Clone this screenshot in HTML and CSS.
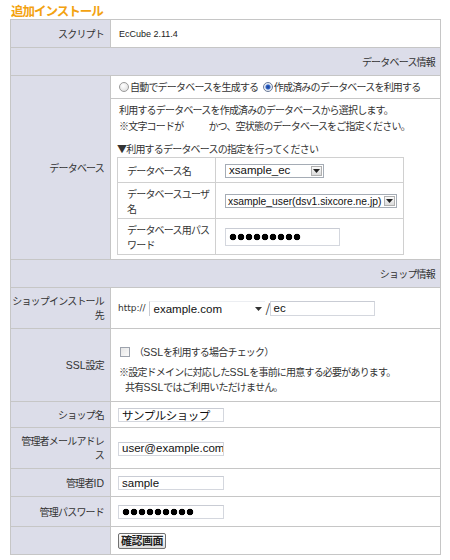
FILE: index.html
```
<!DOCTYPE html>
<html lang="ja">
<head>
<meta charset="utf-8">
<link rel="stylesheet" href="styles.css">
</head>
<body>
<div class="page">
  <h1 class="title">追加インストール</h1>
  <table class="form">
    <colgroup><col class="c-label"><col class="c-value"></colgroup>
    <tr class="r-script">
      <th class="label">スクリプト</th>
      <td class="value latin-sm">EcCube 2.11.4</td>
    </tr>
    <tr class="r-sec">
      <th class="sec" colspan="2">データベース情報</th>
    </tr>
    <tr class="r-radio">
      <th class="label" rowspan="2">データベース</th>
      <td class="value radios">
        <span class="radio"></span><span class="rtext">自動でデータベースを生成する</span>
        <span class="radio on"></span><span class="rtext">作成済みのデータベースを利用する</span>
      </td>
    </tr>
    <tr class="r-desc">
      <td class="value desc">
        <p class="lines">利用するデータベースを作成済みのデータベースから選択します。<br>※文字コードが<span class="blank"></span>かつ、空状態のデータベースをご指定ください。</p>
        <p class="pick">▼利用するデータベースの指定を行ってください</p>
        <table class="sub">
          <colgroup><col class="c-slabel"><col class="c-sval"></colgroup>
          <tr class="s1">
            <th class="slabel">データベース名</th>
            <td class="sval"><span class="select s-db"><span class="sv">xsample_ec</span><span class="sbtn"><svg width="7" height="4" viewBox="0 0 7 4"><path d="M0 0H7L3.5 4Z" fill="#222"/></svg></span></span></td>
          </tr>
          <tr class="s2">
            <th class="slabel">データベースユーザ<br>名</th>
            <td class="sval"><span class="select s-user"><span class="sv">xsample_user(dsv1.sixcore.ne.jp)</span><span class="sbtn"><svg width="7" height="4" viewBox="0 0 7 4"><path d="M0 0H7L3.5 4Z" fill="#222"/></svg></span></span></td>
          </tr>
          <tr class="s3">
            <th class="slabel">データベース用パス<br>ワード</th>
            <td class="sval"><span class="input i-dbpw"><span class="dots"></span></span></td>
          </tr>
        </table>
      </td>
    </tr>
    <tr class="r-sec">
      <th class="sec" colspan="2">ショップ情報</th>
    </tr>
    <tr class="r-install">
      <th class="label">ショップインストール<br>先</th>
      <td class="value">
        <div class="urlrow">
          <span class="http">http://</span>
          <span class="dsel"><span class="sv">example.com</span><svg width="7" height="4" viewBox="0 0 7 4"><path d="M0 0H7L3.5 4Z" fill="#333"/></svg></span>
          <span class="slash">/</span>
          <span class="input i-path">ec</span>
        </div>
      </td>
    </tr>
    <tr class="r-ssl">
      <th class="label"><span class="lt">SSL</span>設定</th>
      <td class="value ssl">
        <div class="checkline"><span class="check"></span><span>（<span class="lt">SSL</span>を利用する場合チェック）</span></div>
        <p class="note">※設定ドメインに対応した<span class="lt">SSL</span>を事前に用意する必要があります。<br><span class="indent"></span>共有<span class="lt">SSL</span>ではご利用いただけません。</p>
      </td>
    </tr>
    <tr class="r-name">
      <th class="label">ショップ名</th>
      <td class="value"><span class="input i-main jp">サンプルショップ</span></td>
    </tr>
    <tr class="r-mail">
      <th class="label">管理者メールアドレ<br>ス</th>
      <td class="value"><span class="input i-main">user@example.com</span></td>
    </tr>
    <tr class="r-id">
      <th class="label">管理者<span class="lt">ID</span></th>
      <td class="value"><span class="input i-main">sample</span></td>
    </tr>
    <tr class="r-pw">
      <th class="label">管理パスワード</th>
      <td class="value"><span class="input i-main"><span class="dots"></span></span></td>
    </tr>
    <tr class="r-btn">
      <th class="label"></th>
      <td class="value"><button class="btn" type="button">確認画面</button></td>
    </tr>
  </table>
</div>
</body>
</html>
```
FILE: styles.css
```
html, body {
  margin: 0;
  padding: 0;
  background: #fff;
}
body {
  font-family: "Noto Sans CJK JP", sans-serif;
  font-size: 10px;
  line-height: 14px;
  letter-spacing: -0.8px;
  color: #333;
}
.lt {
  font-family: "Liberation Sans", sans-serif;
  letter-spacing: 0;
  font-size: 10.5px;
  line-height: 1;
}
.page {
  padding: 2px 10px 0 10px;
}
.title {
  margin: 0;
  font-size: 12.5px;
  letter-spacing: -1px;
  line-height: 17px;
  height: 17px;
  font-weight: bold;
  color: #f3a210;
  padding-left: 1px;
}
.form {
  border-collapse: collapse;
  table-layout: fixed;
  width: 430px;
  border: 1px solid #bdbdbd;
}
.c-label { width: 100px; }
.c-value { width: 330px; }
.form > tbody > tr > th,
.form > tbody > tr > td {
  border: 1px solid #c6c6c6;
  padding: 0;
  vertical-align: middle;
}
.label {
  background: #dcdde9;
  font-weight: normal;
  text-align: right;
  padding: 0 6px 0 0 !important;
}
.sec {
  background: #dcdde9;
  font-weight: normal;
  text-align: right;
  padding: 0 5px 0 0 !important;
}
.value {
  padding-left: 8px !important;
  padding-right: 6px !important;
  background: #fff;
}
.r-script > * { height: 27px; }
.r-sec > * { height: 27px; }
.r-radio > * { height: 22px; }
.r-install > * { height: 40px; }
.r-ssl > * { height: 72px; }
.r-name > * { height: 25px; }
.r-mail > * { height: 40px; }
.r-id > * { height: 27px; }
.r-pw > * { height: 29px; }
.r-btn > * { height: 27px; }

.latin-sm {
  font-family: "Liberation Sans", sans-serif;
  font-size: 9px;
  letter-spacing: 0;
  color: #222;
}
.radios {
  white-space: nowrap;
  padding-left: 8px !important;
}
.radio {
  display: inline-block;
  width: 8px;
  height: 8px;
  border-radius: 50%;
  border: 1px solid #9a9a9a;
  background: radial-gradient(circle at 40% 35%, #fff, #d8d8d8);
  vertical-align: -1px;
  margin-right: 1px;
}
.radio.on {
  background: radial-gradient(circle, #1a3c8c 0, #2f64c8 2px, #dfe6f2 3px, #fff 5px);
  border-color: #6a7a98;
}
.rtext {
  margin-right: 3px;
}
.desc {
  vertical-align: top !important;
  padding-top: 3px !important;
  padding-bottom: 4px !important;
  padding-left: 8px !important;
}
.lines {
  margin: 0;
  line-height: 16px;
}
.blank {
  display: inline-block;
  width: 25px;
}
.pick {
  margin: 7px 0 0 -2px;
  line-height: 16px;
}
.sub {
  border-collapse: collapse;
  table-layout: fixed;
  width: 286px;
  margin-left: -2px;
  border: 1px solid #c8c8c8;
}
.c-slabel { width: 98px; }
.c-sval { width: 188px; }
.sub th, .sub td {
  border: 1px solid #d0d0d0;
  padding: 0 0 0 9px;
  vertical-align: middle;
}
.slabel {
  text-align: left;
  font-weight: normal;
  line-height: 15px;
}
.sval {
  padding-left: 9px !important;
  white-space: nowrap;
}
.s1 > * { height: 24px; }
.s2 > * { height: 35px; }
.s3 > * { height: 35px; }
.select {
  display: inline-flex;
  align-items: center;
  border: 1px solid #a5acb5;
  background: #fff;
  font-family: "Liberation Sans", sans-serif;
  letter-spacing: 0;
  font-size: 11.5px;
  line-height: 11px;
  color: #111;
  box-sizing: border-box;
  vertical-align: middle;
}
.select .sv {
  padding: 0 3px;
  flex: 1;
}
.s-db { width: 99px; height: 14px; }
.s-user { width: 172px; height: 14px; font-size: 10.3px; }
.s-user .sv { padding: 0 2px; }
.sbtn {
  width: 11px;
  height: 10px;
  margin-right: 1px;
  border: 1px solid #b0b0b0;
  background: linear-gradient(#fafafa, #dcdcdc);
  display: flex;
  align-items: center;
  justify-content: center;
  box-sizing: border-box;
}
.input {
  display: inline-flex;
  align-items: center;
  box-sizing: border-box;
  border: 1px solid #d4d7de;
  border-top-color: #c9ccd4;
  background: #fff;
  font-family: "Liberation Sans", sans-serif;
  letter-spacing: 0;
  font-size: 11.5px;
  line-height: 11px;
  color: #111;
  padding-left: 3px;
  vertical-align: middle;
  overflow: hidden;
  white-space: nowrap;
}
.i-dbpw { width: 115px; height: 18px; }
.i-main { width: 106px; height: 14px; margin-left: -1px; }
.i-main.jp {
  font-family: "Noto Sans CJK JP", sans-serif;
  font-size: 11.5px;
  letter-spacing: -0.5px;
}
.dots {
  display: inline-block;
  width: 72px;
  height: 8px;
  background: radial-gradient(circle, #000 3px, transparent 3.6px) 0 0 / 8px 8px repeat-x;
}
.urlrow {
  display: flex;
  align-items: center;
  white-space: nowrap;
}
.http {
  font-family: "DejaVu Sans", sans-serif;
  letter-spacing: 0;
  font-size: 9px;
  color: #333;
  margin-left: -1px;
}
.dsel {
  display: inline-flex;
  align-items: center;
  justify-content: space-between;
  width: 116px;
  height: 15px;
  box-sizing: border-box;
  border-left: 1px solid #c9ccd4;
  border-top: 1px solid #eceef2;
  margin-left: 3px;
  padding: 0 3px 0 4px;
  font-family: "Liberation Sans", sans-serif;
  letter-spacing: 0;
  font-size: 11.5px;
  color: #111;
}
.slash {
  font-size: 12px;
  margin: 0 1px;
}
.i-path { width: 105px; height: 15px; padding-left: 2px; }
.ssl {
  vertical-align: top !important;
}
.checkline {
  display: flex;
  align-items: center;
  height: 16px;
  margin-top: 15px;
}
.check {
  display: inline-block;
  width: 10px;
  height: 10px;
  border: 1px solid #9da3ad;
  background: linear-gradient(135deg, #e6e6e6, #fafafa);
  box-sizing: border-box;
  margin: 0 4px 0 1px;
}
.note {
  margin: 4px 0 0 0;
  line-height: 15px;
}
.indent {
  display: inline-block;
  width: 6px;
}
.btn {
  font-family: "Noto Sans CJK JP", sans-serif;
  font-size: 11px;
  letter-spacing: -0.5px;
  font-weight: bold;
  color: #222;
  height: 16px;
  width: 48px;
  padding: 0;
  line-height: 13px;
  border: 1px solid #707070;
  border-radius: 2px;
  background: linear-gradient(#fdfdfd, #dedede);
  margin-left: -1px;
}
```
